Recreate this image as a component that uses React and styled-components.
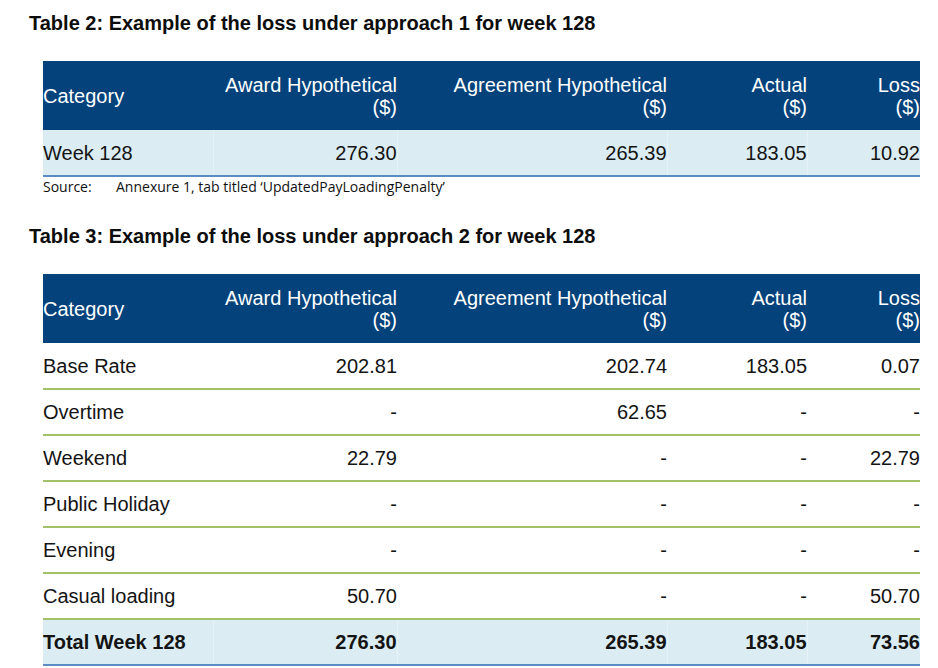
import { createGlobalStyle, styled, css } from 'styled-components';

const GlobalStyle = createGlobalStyle`
  html, body {
    margin: 0;
    padding: 0;
    background: #ffffff;
  }
  body {
    font-family: "Liberation Sans", Arial, sans-serif;
    color: #111111;
  }
`;

const NAVY = '#03427b';
const LIGHT = '#dbedf3';
const GREEN = '#a3c16b';
const BLUE_LINE = '#5b8cc4';

const columns = [170, 184, 270, 140, 113];

const headings = [
  ['Category'],
  ['Award Hypothetical', '($)'],
  ['Agreement Hypothetical', '($)'],
  ['Actual', '($)'],
  ['Loss', '($)'],
];

const approachOne = [
  { cells: ['Week 128', '276.30', '265.39', '183.05', '10.92'], shade: true, edge: 'blue' },
];

const approachTwo = [
  { cells: ['Base Rate', '202.81', '202.74', '183.05', '0.07'], edge: 'green' },
  { cells: ['Overtime', '-', '62.65', '-', '-'], edge: 'green' },
  { cells: ['Weekend', '22.79', '-', '-', '22.79'], edge: 'green' },
  { cells: ['Public Holiday', '-', '-', '-', '-'], edge: 'green' },
  { cells: ['Evening', '-', '-', '-', '-'], edge: 'green' },
  { cells: ['Casual loading', '50.70', '-', '-', '50.70'], edge: 'green' },
  { cells: ['Total Week 128', '276.30', '265.39', '183.05', '73.56'], shade: true, bold: true, edge: 'blue' },
];

function LossTable({ rows }) {
  return (
    <Table>
      <colgroup>
        {columns.map((w, i) => (
          <col key={i} style={{ width: w }} />
        ))}
      </colgroup>
      <thead>
        <tr>
          {headings.map((lines, i) => (
            <HeadCell key={i} first={i === 0}>
              {lines.map((l, j) => (
                <div key={j}>{l}</div>
              ))}
            </HeadCell>
          ))}
        </tr>
      </thead>
      <tbody>
        {rows.map((row, r) => (
          <Row key={r} shade={row.shade} edge={row.edge}>
            {row.cells.map((c, i) => (
              <Cell key={i} first={i === 0} bold={row.bold} shade={row.shade}>
                {c}
              </Cell>
            ))}
          </Row>
        ))}
      </tbody>
    </Table>
  );
}

export default function App() {
  return (
    <Page>
      <GlobalStyle />

      {/* Table 2 */}
      <Caption>Table 2: Example of the loss under approach 1 for week 128</Caption>
      <TableWrap>
        <LossTable rows={approachOne} />
      </TableWrap>
      <Source>
        <SourceLabel>Source:</SourceLabel>
        <span>Annexure 1, tab titled ‘UpdatedPayLoadingPenalty’</span>
      </Source>

      {/* Table 3 */}
      <Caption>Table 3: Example of the loss under approach 2 for week 128</Caption>
      <TableWrap>
        <LossTable rows={approachTwo} />
      </TableWrap>
    </Page>
  );
}

const Page = styled.div`
  width: 938px;
  height: 668px;
  box-sizing: border-box;
  padding: 11px 18px 0 29px;
  overflow: hidden;
`;

const Caption = styled.h2`
  margin: 0 0 26px;
  font-size: 20px;
  line-height: 24px;
  font-weight: 700;
  color: #0d0d0d;
  white-space: nowrap;
`;

const TableWrap = styled.div`
  margin-left: 14px;
  width: 877px;
`;

const Table = styled.table`
  width: 877px;
  border-collapse: collapse;
  table-layout: fixed;
  font-size: 20px;
`;

const HeadCell = styled.th`
  height: 69px;
  padding: 0;
  background: ${NAVY};
  color: #ffffff;
  font-weight: 400;
  line-height: 22px;
  vertical-align: middle;
  text-align: ${({ first }) => (first ? 'left' : 'right')};
  white-space: nowrap;
  overflow: hidden;
`;

const Row = styled.tr`
  height: 46px;
  background: ${({ shade }) => (shade ? LIGHT : '#ffffff')};
  border-bottom: 2px solid ${({ edge }) => (edge === 'blue' ? BLUE_LINE : GREEN)};
`;

const Cell = styled.td`
  padding: 0;
  height: 44px;
  line-height: 24px;
  vertical-align: middle;
  color: #141414;
  white-space: nowrap;
  text-align: ${({ first }) => (first ? 'left' : 'right')};
  font-weight: ${({ bold }) => (bold ? 700 : 400)};
  ${({ shade, first }) =>
    shade &&
    !first &&
    css`
      border-left: 1px solid rgba(255, 255, 255, 0.3);
    `}
`;

const Source = styled.div`
  display: flex;
  height: 47px;
  box-sizing: border-box;
  padding: 1px 0 0 14px;
  font-family: "Open Sans", "Noto Sans", sans-serif;
  font-size: 14px;
  line-height: 18px;
  color: #111111;
`;

const SourceLabel = styled.span`
  width: 73px;
  flex: none;
`;
